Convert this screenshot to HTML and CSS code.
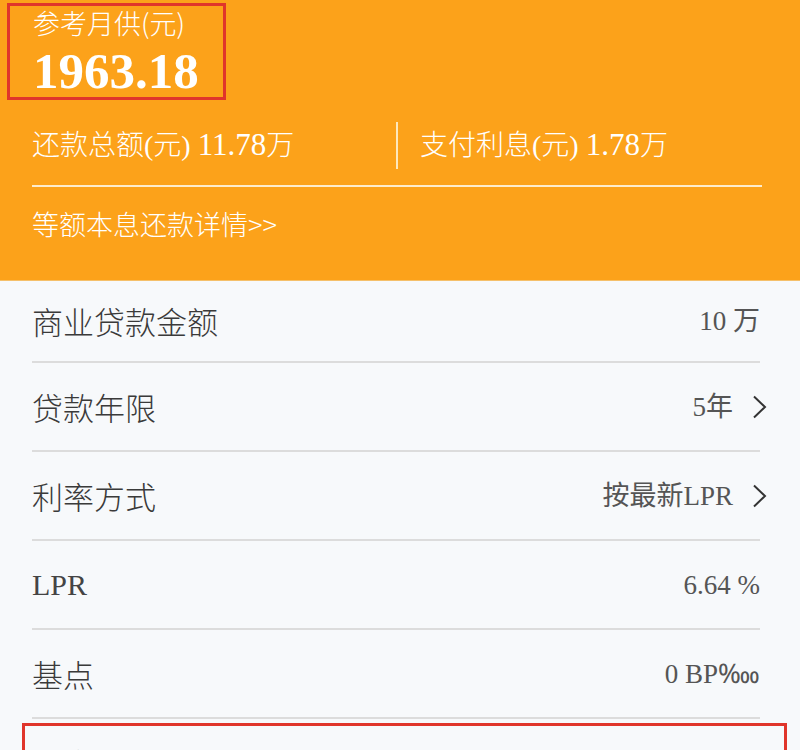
FILE: index.html
```html
<!DOCTYPE html>
<html lang="zh-CN">
<head>
<meta charset="utf-8">
<title>房贷计算</title>
<link rel="stylesheet" href="styles.css">
</head>
<body>
<div class="header">
  <div class="hero-box">
    <div class="hero-label">参考月供(元)</div>
    <div class="hero-amount">1963.18</div>
  </div>
  <div class="summary">
    <div class="sum-item sum-first">还款总额(元) <span class="sum-num">11.78</span>万</div>
    <div class="sum-divider"></div>
    <div class="sum-item sum-second">支付利息(元) <span class="sum-num">1.78</span>万</div>
  </div>
  <div class="header-rule"></div>
  <div class="detail-link">等额本息还款详情&gt;&gt;</div>
</div>
<div class="list">
  <div class="row row-first">
    <span class="label">商业贷款金额</span>
    <span class="value">10 万</span>
  </div>
  <div class="row">
    <span class="label">贷款年限</span>
    <span class="value">5年<svg class="chev" viewBox="0 0 15 24" width="15" height="24"><path d="M2 1.5 L13 12 L2 22.5" fill="none" stroke="#333" stroke-width="2"/></svg></span>
  </div>
  <div class="row">
    <span class="label">利率方式</span>
    <span class="value">按最新LPR<svg class="chev" viewBox="0 0 15 24" width="15" height="24"><path d="M2 1.5 L13 12 L2 22.5" fill="none" stroke="#333" stroke-width="2"/></svg></span>
  </div>
  <div class="row">
    <span class="label label-latin">LPR</span>
    <span class="value">6.64 %</span>
  </div>
  <div class="row">
    <span class="label">基点</span>
    <span class="value">0 BP‱</span>
  </div>
  <div class="highlight">
    <div class="row row-inner">
      <span class="label">利率</span>
      <span class="value">6.64 %</span>
    </div>
  </div>
</div>
</body>
</html>
```
FILE: styles.css
```css
html, body {
  margin: 0;
  padding: 0;
}
body {
  width: 800px;
  height: 750px;
  overflow: hidden;
  background: #f7f9fb;
  font-family: "Liberation Serif", "Noto Sans CJK SC", serif;
}
.header {
  height: 281px;
  background: #fca21a;
  color: #fff;
  box-sizing: border-box;
  padding-top: 3px;
  border-bottom: 1px solid #f5c06a;
}
.hero-box {
  width: fit-content;
  margin-left: 7px;
  border: 3px solid #e0352b;
  padding: 2px 24px 0 23px;
}
.hero-label {
  font-size: 27px;
  line-height: 30px;
  font-family: "Noto Sans CJK SC", "Liberation Sans", sans-serif;
  font-weight: 300;
}
.hero-amount {
  font-size: 51px;
  line-height: 52px;
  font-weight: bold;
  margin-top: 7px;
}
.summary {
  display: flex;
  align-items: center;
  margin: 22px 0 0 32px;
  height: 47px;
}
.sum-item {
  font-size: 28px;
  line-height: 40px;
  font-weight: 300;
  white-space: nowrap;
}
.sum-num {
  font-size: 31px;
  font-weight: normal;
}
.sum-first {
  width: 364px;
}
.sum-divider {
  width: 2px;
  height: 47px;
  background: #fde8bd;
}
.sum-second {
  margin-left: 22px;
}
.header-rule {
  margin: 16px 38px 0 32px;
  height: 2px;
  background: #fdeccc;
}
.detail-link {
  margin: 19px 0 0 32px;
  font-size: 27px;
  line-height: 36px;
  font-family: "Noto Sans CJK SC", "Liberation Sans", sans-serif;
  font-weight: 300;
}
.list {
  display: flex;
  flex-direction: column;
}
.row {
  display: flex;
  justify-content: space-between;
  align-items: center;
  height: 89px;
  box-sizing: border-box;
  margin: 0 40px 0 32px;
  border-bottom: 2px solid #dcdcdc;
}
.row-first {
  height: 82px;
}
.label {
  font-size: 31px;
  line-height: 40px;
  color: #3a3a3a;
  font-family: "Noto Sans CJK SC", sans-serif;
  font-weight: 300;
}
.label-latin {
  font-family: "Liberation Serif", serif;
  font-size: 30px;
  font-weight: normal;
  color: #444;
}
.value {
  display: flex;
  align-items: center;
  font-size: 27px;
  line-height: 36px;
  color: #555;
}
.chev {
  margin-left: 19px;
  margin-right: -7px;
}
.highlight {
  margin: 4px 13px 0 22px;
  border: 3px solid #e0352b;
  padding: 17px 24px 0 7px;
  height: 120px;
}
.row-inner {
  margin: 0;
  align-items: flex-start;
  border-bottom: none;
}
```
